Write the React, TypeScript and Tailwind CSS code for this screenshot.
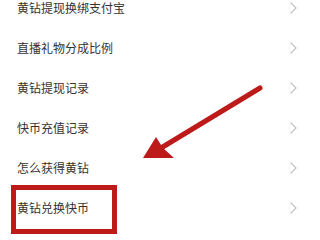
const items = [
  "黄钻提现换绑支付宝",
  "直播礼物分成比例",
  "黄钻提现记录",
  "快币充值记录",
  "怎么获得黄钻",
  "黄钻兑换快币",
];

function Chevron() {
  return (
    <svg width="7" height="12" viewBox="0 0 7 12" fill="none">
      <path d="M1 1 L6 6 L1 11" stroke="#c6c6c6" strokeWidth="1.3" strokeLinecap="round" strokeLinejoin="round" />
    </svg>
  );
}

export default function App() {
  return (
    <div
      className="relative w-[320px] h-[240px] overflow-hidden bg-white"
      style={{ fontFamily: '"Noto Sans CJK SC", "Noto Sans", sans-serif' }}
    >
      <div className="flex flex-col -mt-3">
        {items.map((label) => (
          <div key={label} className="flex h-10 items-center justify-between pl-[17px] pr-[23px]">
            <span className="text-[12px] text-[#333333] leading-none">{label}</span>
            <Chevron />
          </div>
        ))}
      </div>

      {/* annotation: box around the last row */}
      <div className="absolute left-[11px] top-[185px] w-[106px] h-[49px] border-[5px] border-[#bd1a1a]" />

      {/* annotation: arrow */}
      <svg className="absolute left-0 top-0" width="320" height="240" viewBox="0 0 320 240">
        <line x1="260" y1="88" x2="161" y2="148" stroke="#bd1a1a" strokeWidth="5" strokeLinecap="round" />
        <polygon points="143,158 156,137 163,148 174,158" fill="#bd1a1a" />
      </svg>
    </div>
  );
}
